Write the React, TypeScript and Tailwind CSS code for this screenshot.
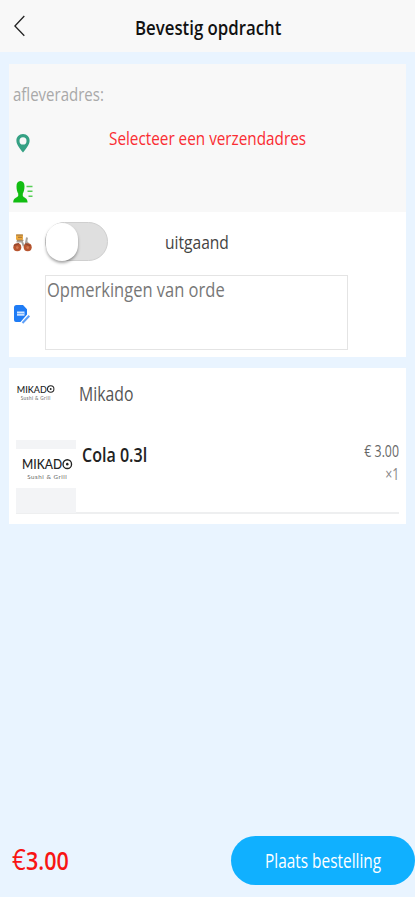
import React from 'react';
import { clsx } from 'clsx';

interface LabelProps {
  className?: string;
  children: React.ReactNode;
}

// Narrow text line; the scale factor and colour come in through className
function Label({ className, children }: LabelProps) {
  return (
    <span className={clsx('block w-max whitespace-nowrap', className)}>{children}</span>
  );
}

function PinIcon() {
  return (
    <svg width="14" height="19" viewBox="0 0 14 19">
      <path fillRule="evenodd" fill="#35a184" d="M7 0C3 0 .4 3 .4 6.700.4 10.800 4.200 14.500 7 18.600 9.800 14.500 13.600 10.800 13.600 6.700 13.600 3 11 0 7 0ZM7 3.200a3.500 3.700 0 1 1 0 7.400a3.500 3.700 0 1 1 0-7.400Z" />
    </svg>
  );
}

function ContactIcon() {
  return (
    <svg width="21" height="22" viewBox="0 0 21 22">
      <path fill="#12bd12" d="M7.500 0C4.800 0 3.500 2.200 3.500 5.200c0 3 .7 5.800 1.700 7.300v2.600C4 17 .2 16.700.2 21.600h14.400c0-4.900-3.800-4.600-4.800-6.500v-2.600c1-1.500 1.700-4.300 1.700-7.300C11.500 2.200 10.200 0 7.500 0Z" />
      <path stroke="#12bd12" strokeWidth="1.500" d="M13.500 5.500h6M14.500 10.300h5M15.500 15.300h4" opacity=".7" />
    </svg>
  );
}

function ScooterIcon() {
  return (
    <svg width="19" height="18" viewBox="0 0 19 18">
      <path d="M3.500 7.500h5.500l1.500 4h2l1.500-8M14 8l1.500 3" fill="none" stroke="#a9a29c" strokeWidth="2" />
      <rect x="3" y=".5" width="7" height="5.500" rx="1" fill="#eba93f" />
      <path d="M3 1h7M4 6.300h6.500M5 3.300h4" stroke="#8b6238" strokeWidth=".8" />
      <circle cx="4.300" cy="13.300" r="4" fill="#b8552f" />
      <circle cx="14.700" cy="13.300" r="4" fill="#b8552f" />
      <path d="M1 11.500l5-2M12.300 9.800l5 2" stroke="#8a4530" strokeWidth="1.200" />
      <circle cx="4.300" cy="13.600" r="1.300" fill="#d47a52" />
      <circle cx="14.700" cy="13.600" r="1.300" fill="#d47a52" />
    </svg>
  );
}

function NoteIcon() {
  return (
    <svg className="mt-[3px]" width="17" height="19" viewBox="0 0 17 19">
      <path fill="#1f7cf5" d="M2.500 0h6.500L13 4.200v5.300L6.500 17H2a2 2 0 0 1-2-2V2.500A2.500 2.500 0 0 1 2.500 0Z" />
      <path fill="#d5e7ff" d="M3 6.500h7.500v4.200H3Z" />
      <path stroke="#72adfa" strokeWidth="1" d="M3 8.600h7.500" />
      <path stroke="#5d9ff8" strokeWidth="2" d="M8.500 18l6.800-7.200" />
    </svg>
  );
}

function MikadoLogo({ className }: { className?: string }) {
  return (
    <svg className={className} viewBox="0 0 50 24" preserveAspectRatio="none" fill="#222">
      <text x="1" y="12" fontFamily="Lato, sans-serif" fontSize="12.500" fontWeight="500" textLength="38.500" lengthAdjust="spacingAndGlyphs">MIKAD</text>
      <circle cx="44.500" cy="7.500" r="4.100" fill="none" stroke="#222" strokeWidth="1.300" />
      <circle cx="44.500" cy="7.500" r="1.200" />
      <text x="6" y="21" fontFamily="Lato, sans-serif" fontSize="6" textLength="38" fill="#666">Sushi &amp; Grill</text>
    </svg>
  );
}

export default function App() {
  return (
    <div className="h-[900px] w-[415px] overflow-hidden bg-white font-['Open_Sans','Noto_Sans',sans-serif]">
      <div className="flex h-[897px] flex-col bg-[#e9f4ff]">
        {/* Header */}
        <header className="flex h-[52px] shrink-0 items-center bg-[#f8f8f8] pl-3.5">
          <svg width="11" height="22" viewBox="0 0 11 22" fill="none" stroke="#222" strokeWidth="1.300">
            <path d="M10.300 1L.9 11l9.400 9.800" />
          </svg>
          <h1 className="ml-[110px] mt-1 h-[30px] text-[20px] leading-[30px] font-semibold text-[#111]">
            <Label className="origin-left scale-x-[0.84]">Bevestig opdracht</Label>
          </h1>
        </header>

        {/* Delivery details */}
        <section className="mx-[9px] mt-3 h-[293px] shrink-0 bg-white text-[19px] leading-7">
          <div className="h-[148px] bg-[#f8f8f8] pt-4 pl-1">
            <Label className="origin-left scale-x-[0.79] text-[#a9a9a9]">afleveradres:</Label>
            <div className="mt-4 flex h-7">
              <div className="w-24 pt-2.5 pl-[3px]">
                <PinIcon />
              </div>
              <Label className="origin-left scale-x-[0.805] text-[#fa2c32]">Selecteer een verzendadres</Label>
            </div>
            <div className="mt-[29px]">
              <ContactIcon />
            </div>
          </div>
          <div className="flex h-[60px] items-center pt-0.5 pl-1">
            <ScooterIcon />
            <div className="mb-1 ml-[13px] h-[39px] w-[63px] rounded-full border border-[#cfcfcf] bg-[#dfdfdf]">
              <div className="h-[38px] w-[32px] rounded-full bg-white shadow-[0_2px_3px_rgba(0,0,0,0.35)]" />
            </div>
            <Label className="mb-0.5 ml-[57px] origin-left scale-x-[0.82] text-[#444]">uitgaand</Label>
          </div>
          <div className="mt-[3px] flex h-[75px] items-center pl-[5px]">
            <NoteIcon />
            <div className="ml-[14px] h-[75px] w-[303px] border border-[#e4e4e4] pl-px text-[20px] text-[#777]">
              <Label className="origin-left scale-x-[0.825]">Opmerkingen van orde</Label>
            </div>
          </div>
        </section>

        {/* Order */}
        <section className="mx-[9px] mt-[11px] h-[156px] shrink-0 bg-white px-[7px] pt-3">
          <div className="flex h-[60px]">
            <MikadoLogo className="mt-[3px] h-[19px] w-[39px]" />
            <Label className="ml-6 h-7 origin-left scale-x-[0.81] text-[19.5px] leading-7 text-[#555]">Mikado</Label>
          </div>
          <div className="flex h-[74px] border-b-2 border-[#eeeff0]">
            <div className="h-[73px] w-[60px] bg-[#f3f4f6] pt-[9px]">
              <div className="h-[39px] bg-white pt-[7px] pl-[5px]">
                <MikadoLogo className="h-[26px] w-[52px]" />
              </div>
            </div>
            <Label className="mt-px ml-1.5 h-7 origin-left scale-x-[0.845] text-[19px] leading-7 font-semibold text-[#222]">Cola 0.3l</Label>
            <div className="ml-auto flex w-9 flex-col items-end text-[16px] leading-[23px] text-[#666]">
              <Label className="origin-right scale-x-[0.77]">€ 3.00</Label>
              <Label className="origin-right scale-x-[0.77] text-[#888]">×1</Label>
            </div>
          </div>
        </section>

        {/* Checkout bar */}
        <footer className="mt-auto mb-3 flex h-[49px] shrink-0 items-center pl-3">
          <div className="mb-0.5 flex w-[219px] items-baseline text-[#f81414]">
            <Label className="origin-left scale-x-[0.8] text-[30px] leading-[49px]">€</Label>
            <Label className="-ml-[3px] origin-left scale-x-[0.86] text-[25px] leading-[49px] font-semibold">3.00</Label>
          </div>
          <button className="flex h-[49px] w-[184px] items-center rounded-[25px] bg-[#10b0ff] pl-[34px] text-[20px] font-medium text-white">
            <Label className="origin-left scale-x-[0.77]">Plaats bestelling</Label>
          </button>
        </footer>
      </div>
    </div>
  );
}
